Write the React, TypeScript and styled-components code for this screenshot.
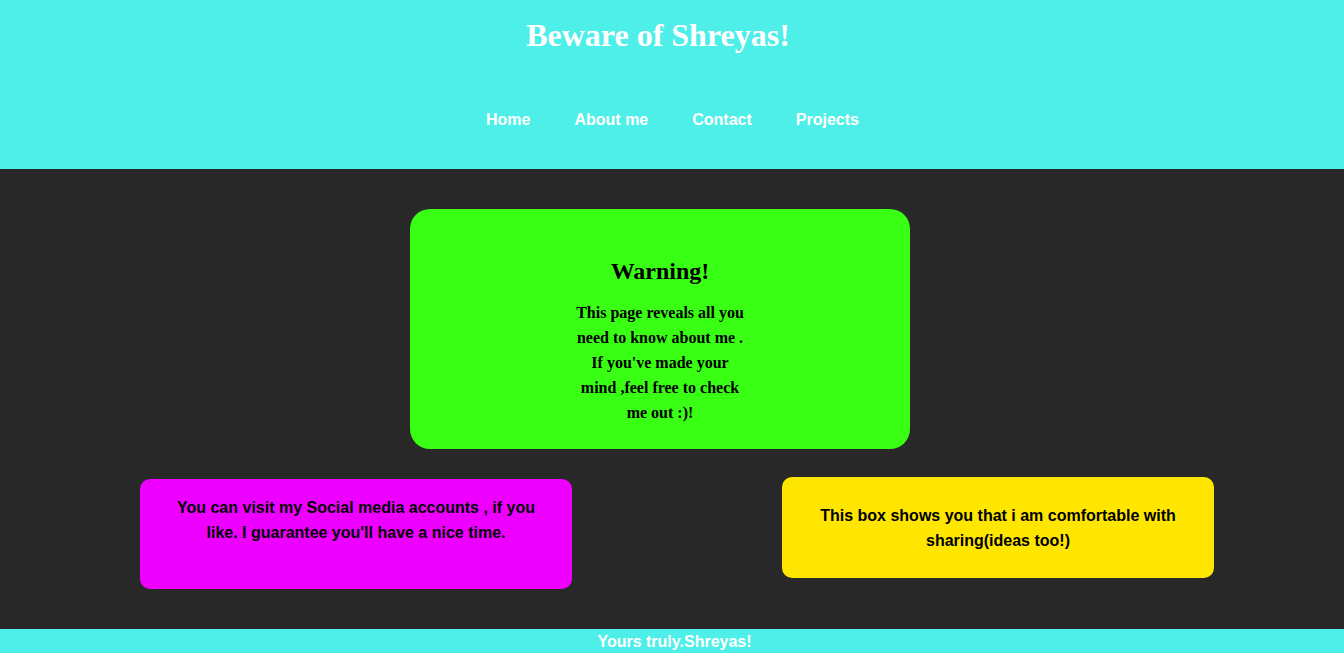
import styled, { createGlobalStyle } from 'styled-components';

const Global = createGlobalStyle`
  body {
    margin: 0;
    background: #282828;
    font-family: "Liberation Sans", Arial, sans-serif;
  }
`;

const Header = styled.header`
  background-color: #4eefe9;
  height: 169px;
  display: flex;
  flex-direction: column;
  align-items: center;
`;

const Title = styled.h1`
  margin: 16px 0 0 -28px;
  font-family: "Liberation Serif", "Times New Roman", serif;
  font-size: 32px;
  line-height: 38px;
  color: #fff;
`;

const Nav = styled.nav`
  display: flex;
  margin-top: 57px;
  margin-left: 1px;
`;

const NavLink = styled.a`
  color: #fff;
  font-weight: bold;
  font-size: 16px;
  padding: 0 22px;
  text-decoration: none;
`;

const Main = styled.main`
  background: #282828;
  padding: 40px 0 40px;
  display: flex;
  flex-direction: column;
  align-items: center;
`;

const Warning = styled.section`
  width: 500px;
  height: 240px;
  margin-right: 24px;
  box-sizing: border-box;
  background: #39ff14;
  border-radius: 20px;
  display: flex;
  flex-direction: column;
  align-items: center;
  padding-top: 47px;
  font-family: "Liberation Serif", "Times New Roman", serif;
  color: #000;
`;

const WarningTitle = styled.h2`
  margin: 0 0 14px;
  font-size: 24px;
  line-height: 30px;
`;

const WarningText = styled.p`
  margin: 0;
  width: 172px;
  text-align: center;
  font-size: 16px;
  font-weight: bold;
  line-height: 25px;
`;

const Row = styled.div`
  align-self: stretch;
  display: flex;
  justify-content: space-between;
  align-items: flex-start;
  padding: 0 130px 0 140px;
  margin-top: 28px;
`;

const Card = styled.div<{ $bg: string; $h: number; $top: number; $pt: number }>`
  width: 432px;
  height: ${p => p.$h}px;
  margin-top: ${p => p.$top}px;
  box-sizing: border-box;
  background: ${p => p.$bg};
  border-radius: 10px;
  padding: ${p => p.$pt}px 30px 0;
  text-align: center;
  font-weight: bold;
  font-size: 16px;
  line-height: 25px;
  color: #000;
`;

const Footer = styled.footer`
  background: #4eefe9;
  color: #fff;
  text-align: center;
  font-weight: bold;
  font-size: 16px;
  line-height: 23px;
  padding: 1px 0 0 5px;
`;

export default function App() {
  return (
    <>
      <Global />
      <Header>
        <Title>Beware of Shreyas!</Title>
        <Nav>
          <NavLink href="#">Home</NavLink>
          <NavLink href="#">About me</NavLink>
          <NavLink href="#">Contact</NavLink>
          <NavLink href="#">Projects</NavLink>
        </Nav>
      </Header>
      <Main>
        <Warning>
          <WarningTitle>Warning!</WarningTitle>
          <WarningText>
            This page reveals all you need to know about me . If you've made your mind ,feel free to check me out :)!
          </WarningText>
        </Warning>
        <Row>
          <Card $bg="#ee00ff" $h={110} $top={2} $pt={16}>
            You can visit my Social media accounts , if you like. I guarantee you'll have a nice time.
          </Card>
          <Card $bg="#ffe600" $h={101} $top={0} $pt={26}>
            This box shows you that i am comfortable with sharing(ideas too!)
          </Card>
        </Row>
      </Main>
      <Footer>Yours truly.Shreyas!</Footer>
    </>
  );
}
